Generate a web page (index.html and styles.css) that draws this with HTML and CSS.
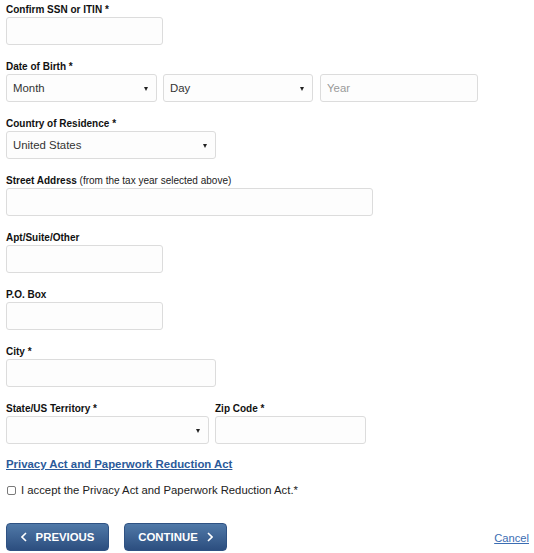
FILE: index.html
```html
<!DOCTYPE html>
<html lang="en">
<head>
<meta charset="utf-8">
<title>Form</title>
<link rel="stylesheet" href="styles.css">
</head>
<body>
<form class="form">
  <div class="field">
    <label class="lbl">Confirm SSN or ITIN *</label>
    <input class="inp w-sm" type="text">
  </div>
  <div class="field">
    <label class="lbl">Date of Birth *</label>
    <div class="row">
      <div class="sel w-month"><span class="val">Month</span></div>
      <div class="sel w-day"><span class="val">Day</span></div>
      <input class="inp w-year" type="text" placeholder="Year">
    </div>
  </div>
  <div class="field">
    <label class="lbl">Country of Residence *</label>
    <div class="sel w-md"><span class="val">United States</span></div>
  </div>
  <div class="field">
    <label class="lbl">Street Address <span class="note">(from the tax year selected above)</span></label>
    <input class="inp w-lg" type="text">
  </div>
  <div class="field">
    <label class="lbl">Apt/Suite/Other</label>
    <input class="inp w-sm" type="text">
  </div>
  <div class="field">
    <label class="lbl">P.O. Box</label>
    <input class="inp w-sm" type="text">
  </div>
  <div class="field">
    <label class="lbl">City *</label>
    <input class="inp w-md" type="text">
  </div>
  <div class="row row-fields">
    <div class="field">
      <label class="lbl">State/US Territory *</label>
      <div class="sel w-state"><span class="val"></span></div>
    </div>
    <div class="field">
      <label class="lbl">Zip Code *</label>
      <input class="inp w-zip" type="text">
    </div>
  </div>
  <a class="privacy" href="#">Privacy Act and Paperwork Reduction Act</a>
  <label class="accept"><input class="chk" type="checkbox"><span>I accept the Privacy Act and Paperwork Reduction Act.*</span></label>
  <div class="actions">
    <button class="btn" type="button"><svg class="chev" viewBox="0 0 6 10" width="6" height="10"><path d="M5 1 L1 5 L5 9" fill="none" stroke="#fff" stroke-width="1.6"/></svg>PREVIOUS</button>
    <button class="btn" type="button">CONTINUE<svg class="chev chev-r" viewBox="0 0 6 10" width="6" height="10"><path d="M1 1 L5 5 L1 9" fill="none" stroke="#fff" stroke-width="1.6"/></svg></button>
    <a class="cancel" href="#">Cancel</a>
  </div>
</form>
</body>
</html>
```
FILE: styles.css
```css
* { box-sizing: border-box; }
html, body { margin: 0; padding: 0; background: #fff; }
body {
  font-family: "Liberation Sans", Arial, sans-serif;
  color: #000;
}
.form {
  padding: 3px 5px 0 6px;
  display: flex;
  flex-direction: column;
  align-items: flex-start;
}
.field {
  display: flex;
  flex-direction: column;
  align-items: flex-start;
  margin-bottom: 15px;
}
.lbl {
  font-size: 10px;
  font-weight: bold;
  line-height: 13px;
  margin-bottom: 1px;
  color: #111;
}
.note { font-weight: normal; color: #222; }
.inp, .sel {
  height: 28px;
  border: 1px solid #dcdcdc;
  border-radius: 3px;
  background: #fdfdfd;
  font-family: "Liberation Sans", Arial, sans-serif;
  font-size: 11.4px;
  color: #333;
  padding: 0 6px;
  margin: 0;
  outline: none;
}
.inp::placeholder { color: #999; }
.sel {
  position: relative;
  display: flex;
  align-items: center;
}
.sel::after {
  content: "";
  position: absolute;
  right: 8px;
  top: 12px;
  border-left: 2.5px solid transparent;
  border-right: 2.5px solid transparent;
  border-top: 4px solid #222;
}
.row { display: flex; }
.row > .sel + .sel { margin-left: 6px; }
.row > .sel + .inp { margin-left: 7px; }
.row-fields .field + .field { margin-left: 6px; }
.w-sm { width: 157px; }
.w-month { width: 151px; }
.w-day { width: 150px; }
.w-year { width: 158px; }
.w-md { width: 210px; }
.w-lg { width: 367px; }
.w-state { width: 203px; }
.w-zip { width: 151px; }
.privacy {
  font-size: 11.4px;
  font-weight: bold;
  line-height: 14px;
  color: #2b5a9a;
  text-decoration: underline;
  margin-top: -2px;
}
.accept {
  display: flex;
  align-items: center;
  margin-top: 12px;
  font-size: 11.3px;
  line-height: 14px;
  color: #222;
}
.chk {
  appearance: none;
  -webkit-appearance: none;
  width: 9px;
  height: 9px;
  margin: 0 5px 0 1px;
  border: 1px solid #7a7a7a;
  border-radius: 2px;
  background: #fff;
}
.actions {
  align-self: stretch;
  display: flex;
  align-items: center;
  margin-top: 26px;
}
.btn {
  width: 103px;
  height: 28px;
  display: flex;
  align-items: center;
  justify-content: center;
  gap: 9px;
  border: 1px solid #2f5283;
  border-radius: 4px;
  background: linear-gradient(#5079a8, #2c4e7f);
  color: #fff;
  font-family: "Liberation Sans", Arial, sans-serif;
  font-size: 11.4px;
  font-weight: bold;
  padding: 0;
  margin: 0;
}
.btn + .btn { margin-left: 15px; }
.chev { display: block; }
.cancel {
  margin-left: auto;
  font-size: 11.2px;
  color: #3b6db3;
  text-decoration: underline;
  margin-top: 2px;
}
```
